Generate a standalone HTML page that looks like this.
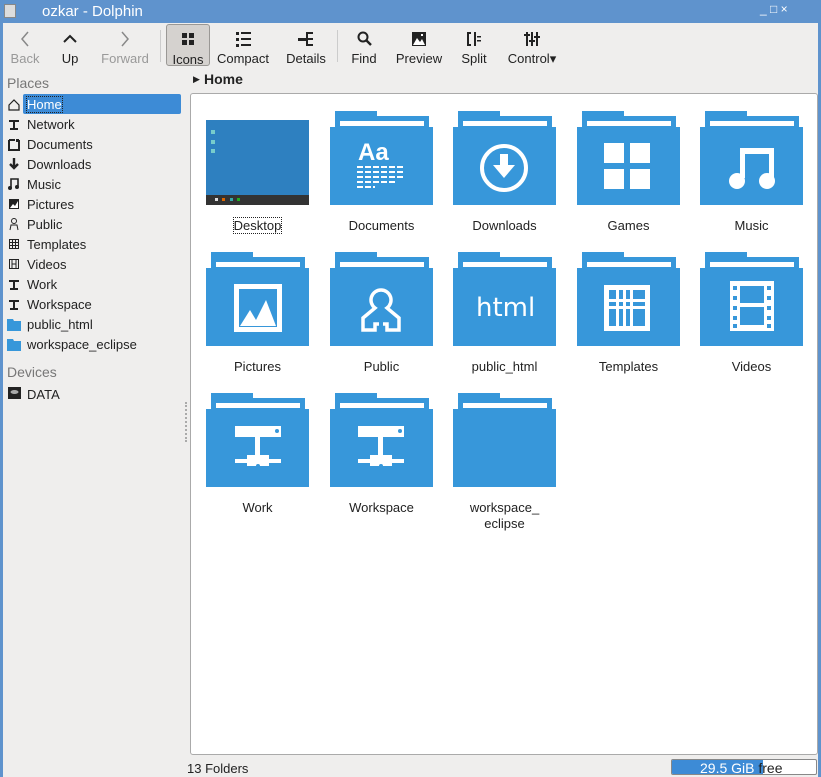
<!DOCTYPE html>
<html><head><meta charset="utf-8"><style>
*{margin:0;padding:0;box-sizing:border-box}
body{width:821px;height:777px;background:#efeeed;font-family:"Liberation Sans",sans-serif;font-size:13px;color:#222;position:relative;overflow:hidden}
.abs{position:absolute}
#title{left:0;top:0;width:821px;height:23px;background:#5f93cd;color:#fff;font-size:14px}
#lb{left:0;top:23px;width:3px;height:754px;background:#5f93cd}
#rb{left:818px;top:23px;width:3px;height:754px;background:#5f93cd}
.tb{position:absolute;top:26px;height:40px;text-align:center;font-size:13px;color:#222}
.tb .lab{position:absolute;left:-10px;right:-10px;top:25px}
.tb svg{position:absolute;top:4px;left:50%;margin-left:-9px}
.dis{color:#999}
.side{position:absolute;left:27px;font-size:13px}
#pane{left:190px;top:93px;width:628px;height:662px;background:#fff;border:1px solid #aaa;border-radius:3px}
.lbl{position:absolute;width:103px;text-align:center;font-size:13px;color:#222}
</style></head><body>
<svg width="0" height="0" style="position:absolute"><defs>
<g id="fold"><rect x="5" y="0" width="42" height="8" fill="#3797da"/><rect x="5" y="5" width="94" height="12" fill="#3797da"/><rect x="10" y="10" width="84" height="5" fill="#fff"/><rect x="0" y="16" width="103" height="78" fill="#3797da"/></g>
</defs></svg>

<div id="title" class="abs">
 <div class="abs" style="left:4px;top:4px;width:12px;height:14px;background:#ddd;border:1px solid #888"></div>
 <div class="abs" style="left:42px;top:3px;font-size:15px">ozkar - Dolphin</div>
 <div class="abs" style="left:760px;top:2px;font-size:12px">_ &#9633; &#215;</div>
</div>
<div id="lb" class="abs"></div><div id="rb" class="abs"></div>

<div class="tb dis" style="left:5px;width:40px"><svg width="18" height="18"><path d="M12 2 L6 9 L12 16" stroke="#888" stroke-width="1.5" fill="none"/></svg><div class="lab">Back</div></div>
<div class="tb" style="left:50px;width:40px"><svg width="18" height="18"><path d="M3 12 L9 6 L15 12" stroke="#222" stroke-width="2" fill="none"/></svg><div class="lab">Up</div></div>
<div class="tb dis" style="left:95px;width:60px"><svg width="18" height="18"><path d="M6 2 L12 9 L6 16" stroke="#888" stroke-width="1.5" fill="none"/></svg><div class="lab">Forward</div></div>
<div class="abs" style="left:160px;top:30px;width:1px;height:32px;background:#ccc"></div>
<div class="abs" style="left:166px;top:24px;width:44px;height:42px;background:#d5d2cf;border:1px solid #9a9895;border-radius:3px"></div>
<div class="tb" style="left:166px;width:44px"><svg width="18" height="18"><rect x="3" y="3" width="5" height="5" fill="#222"/><rect x="10" y="3" width="5" height="5" fill="#222"/><rect x="3" y="10" width="5" height="5" fill="#222"/><rect x="10" y="10" width="5" height="5" fill="#222"/></svg><div class="lab" style="top:26px">Icons</div></div>
<div class="tb" style="left:215px;width:56px"><svg width="18" height="18"><g fill="#222"><rect x="2" y="2" width="3" height="3"/><rect x="7" y="2" width="10" height="2"/><rect x="2" y="8" width="3" height="3"/><rect x="7" y="8" width="10" height="2"/><rect x="2" y="14" width="3" height="3"/><rect x="7" y="14" width="10" height="2"/></g></svg><div class="lab">Compact</div></div>
<div class="tb" style="left:280px;width:52px"><svg width="18" height="18"><g fill="#222"><rect x="1" y="8" width="8" height="3"/><rect x="9" y="2" width="2" height="14"/><rect x="11" y="2" width="5" height="2"/><rect x="11" y="8" width="5" height="2"/><rect x="11" y="14" width="5" height="2"/></g></svg><div class="lab">Details</div></div>
<div class="abs" style="left:337px;top:30px;width:1px;height:32px;background:#ccc"></div>
<div class="tb" style="left:345px;width:38px"><svg width="18" height="18"><circle cx="8" cy="7" r="4.5" stroke="#222" stroke-width="2" fill="none"/><path d="M11 10 L16 15" stroke="#222" stroke-width="2.4"/></svg><div class="lab">Find</div></div>
<div class="tb" style="left:392px;width:54px"><svg width="18" height="18"><rect x="2" y="2" width="14" height="14" fill="#222"/><path d="M3 15 L7 8 L10 12 L12 9 L15 15Z" fill="#fff"/><rect x="11" y="4" width="2" height="2" fill="#fff"/></svg><div class="lab">Preview</div></div>
<div class="tb" style="left:455px;width:38px"><svg width="18" height="18"><g fill="#222"><rect x="2" y="2" width="2" height="14"/><rect x="2" y="2" width="4" height="2"/><rect x="2" y="14" width="4" height="2"/><rect x="9" y="2" width="2" height="14"/><rect x="12" y="6" width="4" height="1.5"/><rect x="12" y="10" width="4" height="1.5"/></g></svg><div class="lab">Split</div></div>
<div class="tb" style="left:505px;width:54px"><svg width="18" height="18"><g fill="#222"><rect x="3" y="2" width="2" height="14"/><rect x="1" y="4" width="6" height="2"/><rect x="8" y="2" width="2" height="14"/><rect x="6" y="10" width="6" height="2"/><rect x="13" y="2" width="2" height="14"/><rect x="11" y="6" width="6" height="2"/></g></svg><div class="lab">Control&#9662;</div></div>

<div class="abs" style="left:193px;top:74px;font-size:9px">&#9654;</div>
<div class="abs" style="left:204px;top:71px;font-weight:bold;font-size:14px">Home</div>

<div class="abs" style="left:7px;top:75px;color:#777;font-size:14px">Places</div>
<div class="abs" style="left:23px;top:94px;width:158px;height:20px;background:#3d8bd6;border-radius:2px"></div>
<div class="side" style="top:97px;color:#fff;outline:1px dotted #222">Home</div>
<div class="side" style="top:117px">Network</div>
<div class="side" style="top:137px">Documents</div>
<div class="side" style="top:157px">Downloads</div>
<div class="side" style="top:177px">Music</div>
<div class="side" style="top:197px">Pictures</div>
<div class="side" style="top:217px">Public</div>
<div class="side" style="top:237px">Templates</div>
<div class="side" style="top:257px">Videos</div>
<div class="side" style="top:277px">Work</div>
<div class="side" style="top:297px">Workspace</div>
<div class="side" style="top:337px">workspace_eclipse</div>
<div class="side" style="top:317px">public_html</div>
<div class="abs" style="left:7px;top:364px;color:#777;font-size:14px">Devices</div>
<div class="side" style="top:387px">DATA</div>
<svg class="abs" style="left:7px;top:97px" width="16" height="310">
 <g fill="#222" stroke="#222">
 <path d="M2 8 L7 3 L12 8 V13 H2Z" fill="none" stroke-width="1.2"/>
 <rect x="2" y="23" width="10" height="2" stroke="none"/><rect x="6" y="24" width="2" height="8" stroke="none"/><rect x="3" y="31" width="8" height="2" stroke="none"/>
 <path d="M2 43 H8 M12 43 V53 H2 V43" fill="none" stroke-width="2"/><rect x="9" y="42" width="3" height="3" stroke="none"/>
 <path d="M7 61 V71 M3 67 L7 71 L11 67" fill="none" stroke-width="2.4"/>
 <path d="M4 91 V82 H11 V89" fill="none" stroke-width="1.6"/><circle cx="3" cy="91" r="2" stroke="none"/><circle cx="10" cy="90" r="2" stroke="none"/>
 <rect x="2" y="102" width="10" height="10" stroke="none"/><path d="M3 111 L6 107 L8 109 L11 104 V111Z" fill="#fff" stroke="none"/>
 <circle cx="7" cy="124" r="2.5" fill="none"/><path d="M3 133 L4 128 H10 L11 133" fill="none"/>
 <rect x="2.5" y="142.5" width="9" height="9" fill="none"/><path d="M5.5 142 V152 M8.5 142 V152 M2 145.5 H12 M2 148.5 H12" stroke-width="1"/>
 <rect x="2.5" y="162.5" width="9" height="9" fill="none"/><path d="M5 162 V172 M9 162 V172" stroke-width="1"/><path d="M5 167 H9"/>
 <rect x="2" y="183" width="10" height="2" stroke="none"/><rect x="6" y="184" width="2" height="8" stroke="none"/><rect x="3" y="191" width="8" height="2" stroke="none"/>
 <rect x="2" y="203" width="10" height="2" stroke="none"/><rect x="6" y="204" width="2" height="8" stroke="none"/><rect x="3" y="211" width="8" height="2" stroke="none"/>
 </g>
 <path d="M0 222 H6 L7 224 H14 V234 H0Z" fill="#3797da"/>
 <path d="M0 242 H6 L7 244 H14 V254 H0Z" fill="#3797da"/>
 <rect x="1" y="290" width="13" height="12" fill="#222"/><ellipse cx="7.5" cy="295" rx="4" ry="2" fill="#aaa"/>
</svg>
<div class="abs" style="left:185px;top:402px;width:2px;height:40px;border-left:2px dotted #aaa"></div>

<div id="pane" class="abs"></div>
<svg class="abs" style="left:0;top:0" width="821" height="777">
 <rect x="206" y="120" width="103" height="85" fill="#2e80c0"/>
 <rect x="206" y="195" width="103" height="10" fill="#333"/>
 <rect x="211" y="130" width="4" height="4" fill="#7cc"/><rect x="211" y="140" width="4" height="4" fill="#7cc"/><rect x="211" y="149" width="4" height="4" fill="#7cc"/>
 <rect x="215" y="198" width="3" height="3" fill="#ddd"/><rect x="222" y="198" width="3" height="3" fill="#d60"/><rect x="230" y="198" width="3" height="3" fill="#3aa"/><rect x="237" y="198" width="3" height="3" fill="#2a2"/>
 <use href="#fold" x="330" y="111"/><use href="#fold" x="453" y="111"/><use href="#fold" x="577" y="111"/><use href="#fold" x="700" y="111"/>
 <use href="#fold" x="206" y="252"/><use href="#fold" x="330" y="252"/><use href="#fold" x="453" y="252"/><use href="#fold" x="577" y="252"/><use href="#fold" x="700" y="252"/>
 <use href="#fold" x="206" y="393"/><use href="#fold" x="330" y="393"/><use href="#fold" x="453" y="393"/>
 <g fill="#fff">
 <text x="358" y="160" font-family="Liberation Sans" font-weight="bold" font-size="24">Aa</text>
 <g stroke="#fff" stroke-width="2" stroke-dasharray="6 2"><path d="M357 167 H405 M357 172 H405 M357 177 H405 M357 182 H395 M357 187 H375"/></g>
 <circle cx="504" cy="168" r="22" fill="none" stroke="#fff" stroke-width="4"/><rect x="500" y="154" width="8" height="13"/><path d="M493 165 H515 L504 178Z"/>
 <rect x="604" y="143" width="20" height="20"/><rect x="630" y="143" width="20" height="20"/><rect x="604" y="169" width="20" height="20"/><rect x="630" y="169" width="20" height="20"/>
 <path d="M740 148 H774 V178 H769 V154 H745 V178 H740Z"/><circle cx="737" cy="181" r="8"/><circle cx="767" cy="181" r="8"/>
 <rect x="234" y="284" width="48" height="48"/><rect x="239" y="289" width="38" height="38" fill="#3797da"/><path d="M240 326 L250 310 L256 320 L266 300 L276 326Z"/>
 <path d="M381 290 a10 10 0 0 1 6 18 l12 10 v12 h-12 v-6 h-4 M381 290 a10 10 0 0 0 -6 18 l-12 10 v12 h12 v-6 h4" fill="none" stroke="#fff" stroke-width="3.5"/>
 <text x="476" y="316" font-family="DejaVu Sans" font-size="26">html</text>
 <rect x="604" y="285" width="46" height="46"/>
 <g fill="#3797da"><rect x="609" y="290" width="7" height="9"/><rect x="619" y="290" width="4" height="9"/><rect x="626" y="290" width="4" height="9"/><rect x="633" y="290" width="12" height="9"/>
 <rect x="609" y="302" width="7" height="4"/><rect x="619" y="302" width="4" height="4"/><rect x="626" y="302" width="4" height="4"/><rect x="633" y="302" width="12" height="4"/>
 <rect x="609" y="309" width="7" height="17"/><rect x="619" y="309" width="4" height="17"/><rect x="626" y="309" width="4" height="17"/><rect x="633" y="309" width="12" height="17"/></g>
 <rect x="730" y="281" width="44" height="50"/>
 <g fill="#3797da"><rect x="740" y="286" width="24" height="17"/><rect x="740" y="307" width="24" height="18"/>
 <rect x="733" y="286" width="4" height="4"/><rect x="733" y="296" width="4" height="4"/><rect x="733" y="306" width="4" height="4"/><rect x="733" y="316" width="4" height="4"/><rect x="733" y="324" width="4" height="4"/>
 <rect x="767" y="286" width="4" height="4"/><rect x="767" y="296" width="4" height="4"/><rect x="767" y="306" width="4" height="4"/><rect x="767" y="316" width="4" height="4"/><rect x="767" y="324" width="4" height="4"/></g>
 <g id="net"><rect x="235" y="426" width="46" height="11"/><circle cx="277" cy="431" r="2" fill="#3797da"/><rect x="255" y="437" width="5" height="22"/><rect x="235" y="459" width="46" height="4"/><rect x="247" y="455" width="22" height="11"/><circle cx="258" cy="466" r="2" fill="#3797da"/></g>
 <use href="#net" x="123" y="0"/>
 </g>
</svg>
<div class="lbl" style="left:206px;top:218px"><span style="outline:1px dotted #222">Desktop</span></div>
<div class="lbl" style="left:330px;top:218px">Documents</div>
<div class="lbl" style="left:453px;top:218px">Downloads</div>
<div class="lbl" style="left:577px;top:218px">Games</div>
<div class="lbl" style="left:700px;top:218px">Music</div>
<div class="lbl" style="left:206px;top:359px">Pictures</div>
<div class="lbl" style="left:330px;top:359px">Public</div>
<div class="lbl" style="left:453px;top:359px">public_html</div>
<div class="lbl" style="left:577px;top:359px">Templates</div>
<div class="lbl" style="left:700px;top:359px">Videos</div>
<div class="lbl" style="left:206px;top:500px">Work</div>
<div class="lbl" style="left:330px;top:500px">Workspace</div>
<div class="lbl" style="left:453px;top:500px;line-height:16px">workspace_<br>eclipse</div>

<div class="abs" style="left:187px;top:761px">13 Folders</div>
<div class="abs" style="left:671px;top:759px;width:146px;height:16px;background:#fff;border:1px solid #888;border-radius:2px;overflow:hidden">
 <div class="abs" style="left:0;top:0;width:91px;height:14px;background:#3d8bd6"></div>
 <div class="abs" style="left:28px;top:0;color:#fff;width:100px;font-size:14px">29.5 GiB <span style="color:#222">free</span></div>
</div>
</body></html>
